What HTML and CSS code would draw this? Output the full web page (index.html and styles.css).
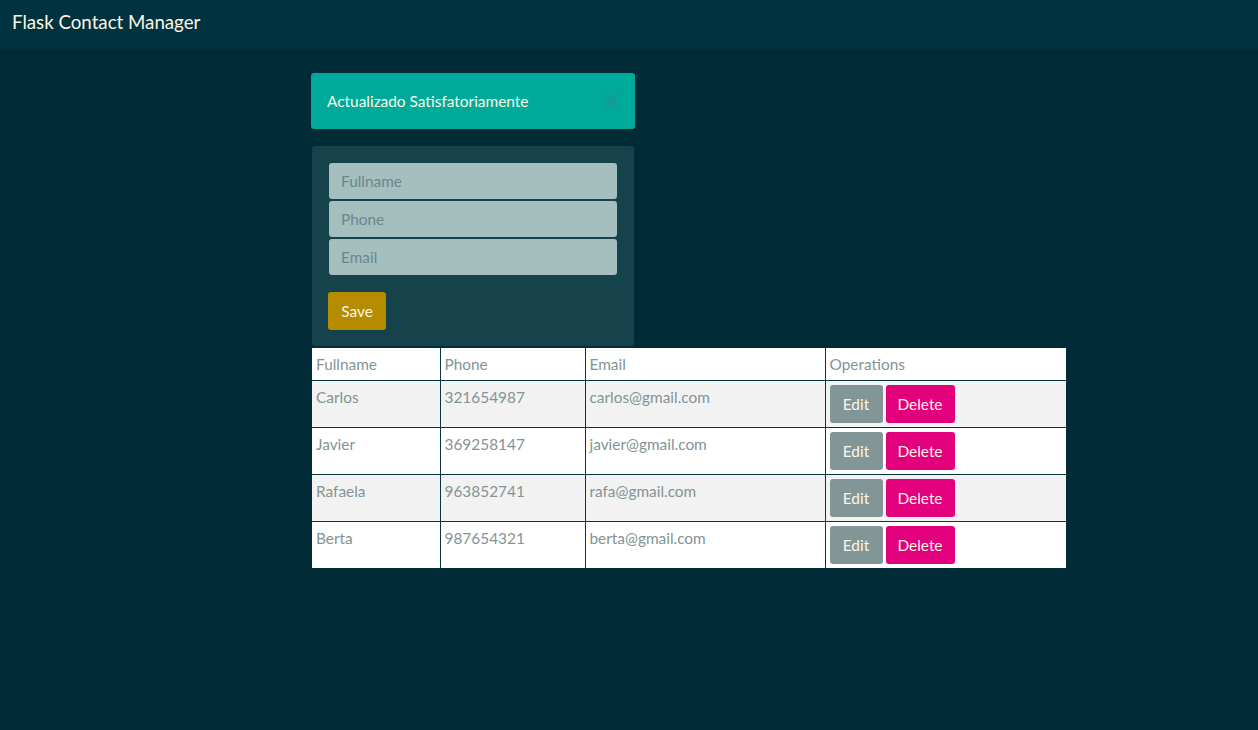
FILE: index.html
```html
<!DOCTYPE html>
<html lang="es">
<head>
<meta charset="utf-8">
<title>Flask Contact Manager</title>
<link rel="stylesheet" href="styles.css">
</head>
<body>
<nav class="navbar"><span class="brand">Flask Contact Manager</span></nav>
<main class="main">
  <div class="left">
    <div class="alert">
      <span>Actualizado Satisfatoriamente</span>
      <svg class="close" width="18" height="18" viewBox="0 0 18 18"><path d="M1 1L17 17M17 1L1 17" stroke="#2b8e89" stroke-width="1.6" fill="none"/></svg>
    </div>
    <div class="card">
      <div class="field">Fullname</div>
      <div class="field">Phone</div>
      <div class="field">Email</div>
      <button class="btn btn-save">Save</button>
    </div>
  </div>
  <table class="table">
    <thead>
      <tr><th class="c1">Fullname</th><th class="c2">Phone</th><th class="c3">Email</th><th class="c4">Operations</th></tr>
    </thead>
    <tbody>
      <tr class="odd"><td>Carlos</td><td>321654987</td><td>carlos@gmail.com</td><td class="ops"><button class="btn btn-edit">Edit</button><button class="btn btn-del">Delete</button></td></tr>
      <tr><td>Javier</td><td>369258147</td><td>javier@gmail.com</td><td class="ops"><button class="btn btn-edit">Edit</button><button class="btn btn-del">Delete</button></td></tr>
      <tr class="odd"><td>Rafaela</td><td>963852741</td><td>rafa@gmail.com</td><td class="ops"><button class="btn btn-edit">Edit</button><button class="btn btn-del">Delete</button></td></tr>
      <tr><td>Berta</td><td>987654321</td><td>berta@gmail.com</td><td class="ops"><button class="btn btn-edit">Edit</button><button class="btn btn-del">Delete</button></td></tr>
    </tbody>
  </table>
</main>
</body>
</html>
```
FILE: styles.css
```css
* { box-sizing: border-box; }
html, body { margin: 0; padding: 0; }
body {
  background: #002b37;
  font-family: Lato, "Liberation Sans", sans-serif;
  font-size: 15.4px;
  color: #839496;
  height: 730px;
}
.navbar {
  height: 49px;
  background: #00333f;
  display: flex;
  align-items: center;
  padding: 0 12px;
}
.brand {
  color: #fdf6e3;
  font-size: 18.7px;
  padding-bottom: 5px;
}
.main {
  padding: 24px 0 0 311px;
}
.left {
  width: 324px;
  display: flex;
  flex-direction: column;
}
.alert {
  background: #00aa9a;
  color: #fdf6e3;
  height: 56px;
  border-radius: 3px;
  display: flex;
  align-items: center;
  justify-content: space-between;
  padding: 0 15px 0 16px;
  margin-bottom: 17px;
}
.card {
  background: #16434b;
  margin-left: 1px;
  width: 322px;
  border-radius: 3px;
  padding: 17px 17px 16px 16px;
  display: flex;
  flex-direction: column;
  gap: 2px;
  margin-bottom: 2px;
}
.field {
  margin-left: 1px;
  height: 36px;
  background: #a5bfbf;
  border-radius: 3px;
  color: #6a878c;
  padding: 0 12px;
  display: flex;
  align-items: center;
}
.btn {
  border: none;
  border-radius: 3px;
  font-family: inherit;
  font-size: 15.4px;
  color: #fdf6e3;
  height: 38px;
  padding: 0;
  cursor: pointer;
}
.btn-save {
  background: #b58b00;
  align-self: flex-start;
  margin-top: 15px;
  width: 58px;
}
.table {
  margin-left: 1px;
  border-collapse: collapse;
  background: #fff;
  width: 754px;
}
.table th, .table td {
  border: 1px solid #073642;
  text-align: left;
  font-weight: normal;
  vertical-align: top;
  padding: 5px 4px;
  color: #839496;
}
.table tr:first-child th { border-top: none; }
.table th:first-child, .table td:first-child { border-left: none; }
.table th:last-child, .table td:last-child { border-right: none; }
.table tr:last-child td { border-bottom: none; }
.table th { height: 32px; padding-top: 7px; padding-bottom: 4px; }
.table td { height: 47px; padding-top: 7px; }
.table td.ops { padding: 4px; }
.c1 { width: 128px; }
.c2 { width: 145px; }
.c3 { width: 240px; }
.odd td { background: #f2f2f2; }
.btn-edit { background: #829597; width: 53px; margin-right: 3px; }
.btn-del { background: #e3007d; width: 69px; }
```
